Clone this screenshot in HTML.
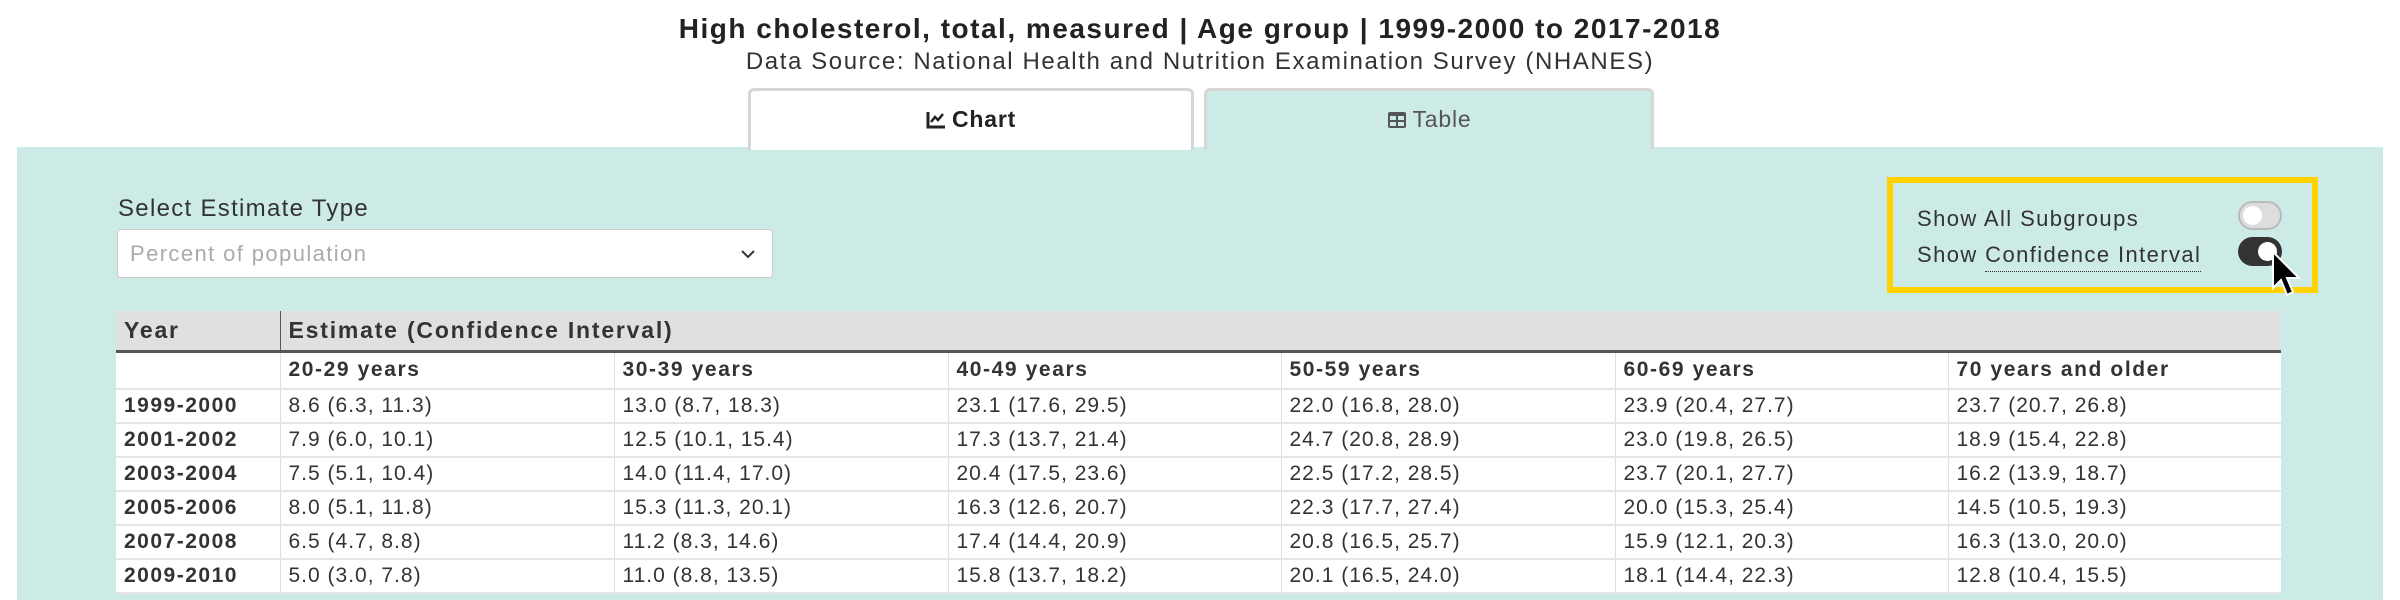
<!DOCTYPE html>
<html><head><meta charset="utf-8"><style>
*{margin:0;padding:0;box-sizing:border-box}
body{width:2400px;height:600px;background:#fff;font-family:"Liberation Sans",sans-serif;color:#333;position:relative;overflow:hidden}
.t1{position:absolute;top:13px;left:0;width:2400px;text-align:center;font-weight:bold;font-size:28px;letter-spacing:1.5px;color:#222}
.t2{position:absolute;top:48px;left:0;width:2400px;text-align:center;font-size:24px;letter-spacing:1.6px;color:#333}
.panel{position:absolute;left:17px;top:147px;width:2366px;height:453px;background:#cdebe6}
.tab{position:absolute;top:88px;height:61px;border:3px solid #d6d6d6;border-bottom:none;border-radius:6px 6px 0 0;text-align:center;font-size:23px;letter-spacing:0.8px;line-height:56px}
.lbl{position:absolute;left:118px;top:195px;font-size:24px;letter-spacing:1.3px;color:#333}
.sel{position:absolute;left:117px;top:229px;width:656px;height:49px;background:#fff;border:1px solid #ccc;border-radius:4px;font-size:22px;letter-spacing:1.4px;color:#aaa;padding-left:12px;line-height:47px}
.yb{position:absolute;left:1887px;top:177px;width:431px;height:116px;border:6px solid #ffd200}
.sw{position:absolute;font-size:22px;letter-spacing:1.4px;color:#333}
.tg{position:absolute;width:44px;height:29px;border-radius:15px}
table{position:absolute;left:116px;top:311px;border-collapse:collapse;table-layout:fixed;width:2165px;background:#fff;font-size:21px;letter-spacing:1px;color:#333}
td,th{height:34px;padding:0 8px;text-align:left;border-bottom:2px solid #e6e6e6;border-left:1px solid #e0e0e0;white-space:nowrap;overflow:hidden}
th{font-weight:bold}
tr.h th{background:#e0e0e0;height:40px;border-bottom:3px solid #555;font-size:23px;letter-spacing:1.8px}
tr.s th{height:38px;font-size:21px;letter-spacing:1.6px}
td.y{font-weight:bold;letter-spacing:1.5px}
</style></head><body>
<div class="t1">High cholesterol, total, measured | Age group | 1999-2000 to 2017-2018</div>
<div class="t2">Data Source: National Health and Nutrition Examination Survey (NHANES)</div>
<div class="panel"></div>
<div class="tab" style="left:748px;width:446px;background:#fff;height:62px;font-weight:bold;color:#222"><svg width="20" height="18" viewBox="0 0 20 18" style="vertical-align:-2px;margin-right:6px"><path d="M2 1V16H19" stroke="#222" stroke-width="3" fill="none"/><path d="M5 11L9 6L12 9L17 3" stroke="#222" stroke-width="2.5" fill="none"/></svg>Chart</div>
<div class="tab" style="left:1204px;width:450px;background:#cdebe6;color:#555"><svg width="20" height="18" viewBox="0 0 20 18" style="vertical-align:-2px;margin-right:6px"><rect x="1" y="1" width="18" height="16" rx="2" fill="#555"/><rect x="3" y="5" width="6" height="4" fill="#cdebe6"/><rect x="11" y="5" width="6" height="4" fill="#cdebe6"/><rect x="3" y="11" width="6" height="4" fill="#cdebe6"/><rect x="11" y="11" width="6" height="4" fill="#cdebe6"/></svg>Table</div>
<div class="lbl">Select Estimate Type</div>
<div class="sel">Percent of population<svg width="16" height="10" viewBox="0 0 16 10" style="position:absolute;right:16px;top:19px"><path d="M2 2L8 8L14 2" stroke="#333" stroke-width="2" fill="none"/></svg></div>
<div class="yb"></div>
<div class="sw" style="left:1917px;top:206px">Show All Subgroups</div>
<div class="sw" style="left:1917px;top:242px">Show <span style="border-bottom:1px dotted #333;padding-bottom:4px">Confidence Interval</span></div>
<div class="tg" style="left:2238px;top:201px;background:#ddd;border:2px solid #bbb"><div style="position:absolute;left:3px;top:3px;width:19px;height:19px;border-radius:50%;background:#fff"></div></div>
<div class="tg" style="left:2238px;top:237px;background:#333"><div style="position:absolute;left:20px;top:5px;width:19px;height:19px;border-radius:50%;background:#fff"></div></div>
<svg width="40" height="50" viewBox="0 0 40 50" style="position:absolute;left:2270px;top:250px"><path d="M3 2L3 38L11 30L17 45L23 42L17 28L29 28Z" fill="#000" stroke="#fff" stroke-width="2"/></svg>
<table>
<colgroup><col style="width:164px"><col style="width:334px"><col style="width:334px"><col style="width:333px"><col style="width:334px"><col style="width:333px"><col style="width:333px"></colgroup>
<tr class="h"><th style="border-left:none">Year</th><th colspan="6" style="border-left:1px solid #555">Estimate (Confidence Interval)</th></tr>
<tr class="s"><th style="border-left:none"></th><th>20-29 years</th><th>30-39 years</th><th>40-49 years</th><th>50-59 years</th><th>60-69 years</th><th>70 years and older</th></tr>
<tr><td class="y" style="border-left:none">1999-2000</td><td>8.6 (6.3, 11.3)</td><td>13.0 (8.7, 18.3)</td><td>23.1 (17.6, 29.5)</td><td>22.0 (16.8, 28.0)</td><td>23.9 (20.4, 27.7)</td><td>23.7 (20.7, 26.8)</td></tr>
<tr><td class="y" style="border-left:none">2001-2002</td><td>7.9 (6.0, 10.1)</td><td>12.5 (10.1, 15.4)</td><td>17.3 (13.7, 21.4)</td><td>24.7 (20.8, 28.9)</td><td>23.0 (19.8, 26.5)</td><td>18.9 (15.4, 22.8)</td></tr>
<tr><td class="y" style="border-left:none">2003-2004</td><td>7.5 (5.1, 10.4)</td><td>14.0 (11.4, 17.0)</td><td>20.4 (17.5, 23.6)</td><td>22.5 (17.2, 28.5)</td><td>23.7 (20.1, 27.7)</td><td>16.2 (13.9, 18.7)</td></tr>
<tr><td class="y" style="border-left:none">2005-2006</td><td>8.0 (5.1, 11.8)</td><td>15.3 (11.3, 20.1)</td><td>16.3 (12.6, 20.7)</td><td>22.3 (17.7, 27.4)</td><td>20.0 (15.3, 25.4)</td><td>14.5 (10.5, 19.3)</td></tr>
<tr><td class="y" style="border-left:none">2007-2008</td><td>6.5 (4.7, 8.8)</td><td>11.2 (8.3, 14.6)</td><td>17.4 (14.4, 20.9)</td><td>20.8 (16.5, 25.7)</td><td>15.9 (12.1, 20.3)</td><td>16.3 (13.0, 20.0)</td></tr>
<tr><td class="y" style="border-left:none">2009-2010</td><td>5.0 (3.0, 7.8)</td><td>11.0 (8.8, 13.5)</td><td>15.8 (13.7, 18.2)</td><td>20.1 (16.5, 24.0)</td><td>18.1 (14.4, 22.3)</td><td>12.8 (10.4, 15.5)</td></tr>
</table>
</body></html>
